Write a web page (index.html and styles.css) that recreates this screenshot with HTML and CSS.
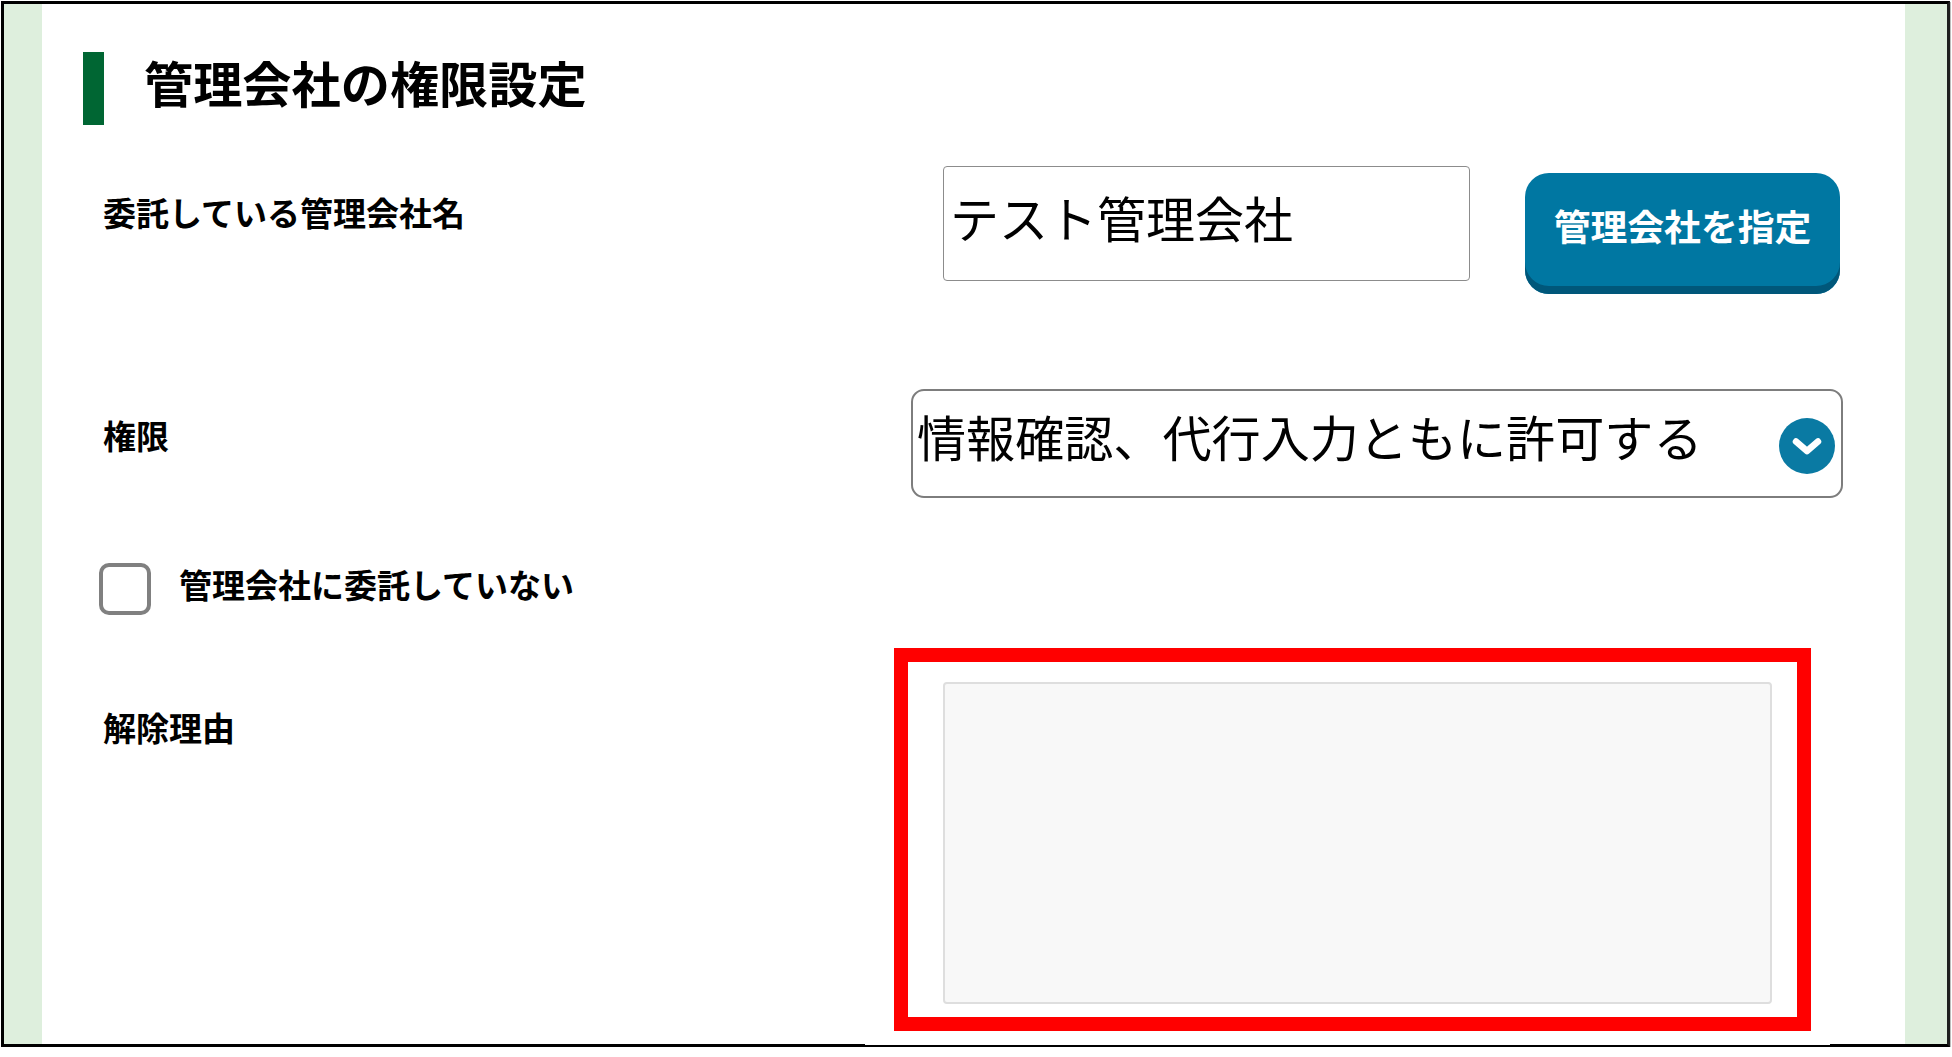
FILE: index.html
```html
<!DOCTYPE html>
<html lang="ja">
<head>
<meta charset="utf-8">
<title>管理会社の権限設定</title>
<link rel="stylesheet" href="styles.css">
</head>
<body>
<div class="frame">
  <div class="strip strip-left"></div>
  <main class="main">
    <h1 class="heading"><span class="heading-bar"></span><span class="heading-text">管理会社の権限設定</span></h1>
    <div class="row row-company">
      <div class="label">委託している管理会社名</div>
      <div class="input">テスト管理会社</div>
      <button class="btn" type="button">管理会社を指定</button>
    </div>
    <div class="row row-auth">
      <div class="label">権限</div>
      <div class="select">
        <span>情報確認、代行入力ともに許可する</span>
        <svg class="chevron" viewBox="0 0 56 56" width="56" height="56" aria-hidden="true"><circle cx="28" cy="28" r="28" fill="#0a7aa3"/><path d="M17 23.5 L28 33 L39 23.5" fill="none" stroke="#fff" stroke-width="6.5" stroke-linecap="round" stroke-linejoin="round"/></svg>
      </div>
    </div>
    <div class="row row-check">
      <span class="checkbox"></span>
      <span class="check-label">管理会社に委託していない</span>
    </div>
    <div class="row row-reason">
      <div class="label">解除理由</div>
      <div class="highlight"><div class="textarea"></div></div>
    </div>
  </main>
  <div class="strip strip-right"></div>
</div>
</body>
</html>
```
FILE: styles.css
```css
* { box-sizing: border-box; }
html, body { margin: 0; padding: 0; background: #fff; }
body {
  font-family: "Noto Sans CJK JP", "Noto Sans", sans-serif;
  color: #000;
  overflow: hidden;
}
.frame {
  position: relative;
  display: flex;
  width: 1949px;
  height: 1046px;
  margin: 1px 0 0 1px;
  border: 3px solid #000;
  border-right-color: #1f1f1f;
  background: #fff;
  box-shadow: 1px 1px 0 #bdbdbd;
}
.frame::after {
  content: "";
  position: absolute;
  left: 861px;
  bottom: -1px;
  width: 965px;
  height: 1px;
  background: #fff;
}
.strip { flex: 0 0 auto; background: #deefdd; }
.strip-left { width: 38px; }
.strip-right { width: 42px; }
.main { flex: 1 1 auto; min-width: 0; padding: 48px 0 0 41px; }

.heading { display: flex; align-items: center; gap: 40px; height: 73px; margin: 0; }
.heading-bar { flex: 0 0 21px; height: 73px; background: #006633; }
.heading-text { font-size: 49.2px; font-weight: 700; line-height: 64px; padding-bottom: 14px; }

.row { display: flex; align-items: flex-start; margin-left: 22px; }
.label { margin-left: -2px; font-size: 33px; font-weight: 700; line-height: 46px; padding-top: 23px; white-space: nowrap; }

.row-company { margin-top: 41px; }
.row-company .label { width: 840px; }
.input {
  display: flex; align-items: center;
  width: 527px; height: 115px;
  padding: 0 0 14px 6px;
  font-size: 49px;
  border: 1px solid #8c8c8c; border-radius: 4px;
}
.btn {
  width: 315px; height: 121px;
  margin: 7px 0 0 55px;
  padding: 0 0 18px;
  font: 700 36.8px "Noto Sans CJK JP", sans-serif;
  color: #fff;
  background: #0077a2;
  border: 0; border-radius: 24px;
  box-shadow: inset 0 -8px 0 #00577a;
}

.row-auth { margin-top: 95px; }
.row-auth .label { width: 808px; }
.select {
  display: flex; align-items: center; justify-content: space-between;
  width: 932px; height: 109px;
  padding: 0 6px 0 4px;
  font-size: 49.1px;
  border: 2px solid #7d7d7d; border-radius: 13px;
}
.select span { padding-bottom: 16px; white-space: nowrap; }
.chevron { display: block; flex: none; margin-top: 4px; }

.row-check { margin: 65px 0 0 16px; gap: 28px; }
.checkbox { flex: none; width: 52px; height: 52px; background: #fff; border: 4px solid #808080; border-radius: 10px; }
.check-label { margin-top: -2px; font-size: 33px; font-weight: 700; line-height: 46px; white-space: nowrap; }

.row-reason { margin-top: 33px; }
.row-reason .label { width: 791px; padding-top: 56px; }
.highlight { width: 917px; height: 383px; padding: 20px 25px 13px 35px; border: 14px solid #ff0000; background: #fff; }
.textarea { width: 100%; height: 100%; background: #f8f8f8; border: 2px solid #dedede; border-radius: 4px; }
```
